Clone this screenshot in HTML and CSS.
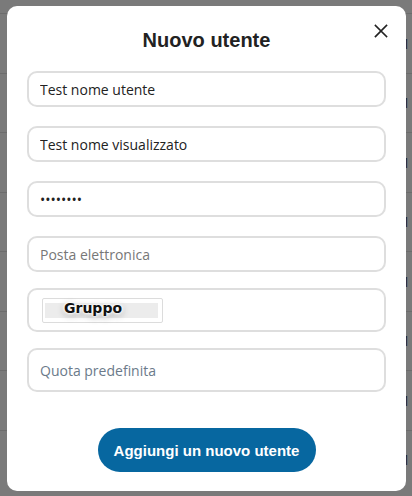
FILE: index.html
```html
<!DOCTYPE html>
<html lang="it">
<head>
<meta charset="utf-8">
<title>Nuovo utente</title>
<link rel="stylesheet" href="styles.css">
</head>
<body>
<div class="page">
  <div class="row"><span class="num">1</span></div>
  <div class="row"><span class="num">1</span></div>
  <div class="row"><span class="num">1</span></div>
  <div class="row"><span class="num">1</span></div>
  <div class="row"><span class="num">1</span></div>
  <div class="row"><span class="num">1</span></div>
  <div class="row"><span class="num">1</span></div>
  <div class="row"><span class="num">1</span></div>
</div>
<div class="overlay"></div>
<div class="modal">
  <button class="close" type="button" aria-label="Chiudi">
    <svg width="14" height="14" viewBox="0 0 14 14"><path d="M1.5 1.5L12.5 12.5M12.5 1.5L1.5 12.5" stroke="#222" stroke-width="1.7" stroke-linecap="square" fill="none"/></svg>
  </button>
  <h2 class="title">Nuovo utente</h2>
  <form class="form">
    <input class="field" type="text" value="Test nome utente">
    <input class="field" type="text" value="Test nome visualizzato">
    <input class="field" type="password" value="12345678">
    <input class="field" type="email" placeholder="Posta elettronica">
    <div class="field field-tall group-field">
      <div class="chip">
        <div class="chip-inner"><span class="chip-label">Gruppo</span></div>
      </div>
    </div>
    <input class="field field-tall quota" type="text" placeholder="Quota predefinita">
    <div class="actions">
      <button class="submit" type="button">Aggiungi un nuovo utente</button>
    </div>
  </form>
</div>
</body>
</html>
```

FILE: styles.css
```css
* { box-sizing: border-box; }
html, body { margin: 0; padding: 0; }
body {
  width: 412px;
  height: 496px;
  overflow: hidden;
  background: #fff;
  font-family: "Open Sans", "Noto Sans", sans-serif;
}
.page {
  padding-top: 13px;
}
.row {
  height: 59.5px;
  border-top: 1px solid #e2e2e2;
  padding-left: 402px;
  display: flex;
  align-items: center;
  overflow: hidden;
  white-space: nowrap;
  font-size: 14px;
  color: #444;
}
.overlay {
  position: fixed;
  inset: 0;
  background: rgba(0, 0, 0, 0.52);
}
.modal {
  position: fixed;
  left: 7px;
  top: 6px;
  width: 399px;
  height: 485px;
  background: #fff;
  border-radius: 10px;
  padding: 22px 20px 19px;
}
.close {
  position: absolute;
  top: 18px;
  right: 18px;
  width: 14px;
  height: 14px;
  padding: 0;
  border: 0;
  background: none;
  display: flex;
}
.title {
  margin: 0;
  text-align: center;
  font-family: "Liberation Sans", Arial, sans-serif;
  font-weight: bold;
  font-size: 20px;
  line-height: 24px;
  color: #222;
}
.form {
  margin-top: 19px;
  display: flex;
  flex-direction: column;
}
.field {
  display: block;
  width: 100%;
  height: 36px;
  margin: 0 0 19px;
  padding: 0 11px;
  border: 2px solid #dedede;
  border-radius: 10px;
  background: #fff;
  font-family: "Open Sans", "Noto Sans", sans-serif;
  font-size: 14px;
  color: #222;
  outline: none;
}
.field::placeholder { color: #777; }
.field:nth-child(4) { margin-bottom: 16px; }
.field-tall {
  height: 44px;
  margin-bottom: 16px;
}
.group-field {
  padding: 8px 13px;
}
.chip {
  width: 121px;
  height: 25px;
  border: 1px solid #dcdcdc;
  border-radius: 2px;
  padding: 4px 4px 4px 2px;
}
.chip-inner {
  height: 15px;
  background: #ececec;
  padding-left: 19px;
}
.chip-label {
  display: block;
  font-family: "DejaVu Sans", sans-serif;
  font-weight: bold;
  font-size: 14px;
  line-height: 11px;
  color: #111;
  text-shadow: 0 0 2px #fff, 0 0 3px #fff, 0 0 4px #fff, 0 0 5px #fff, 0 2px 7px rgba(0,0,0,0.45);
}
.quota { margin-bottom: 36px; }
.quota::placeholder { color: #6b7a8a; }
.actions {
  display: flex;
  justify-content: center;
}
.submit {
  width: 218px;
  height: 44px;
  border: 0;
  border-radius: 22px;
  background: #0767a0;
  color: #fff;
  font-family: "Liberation Sans", Arial, sans-serif;
  font-weight: bold;
  font-size: 15px;
  padding: 0;
}
```
